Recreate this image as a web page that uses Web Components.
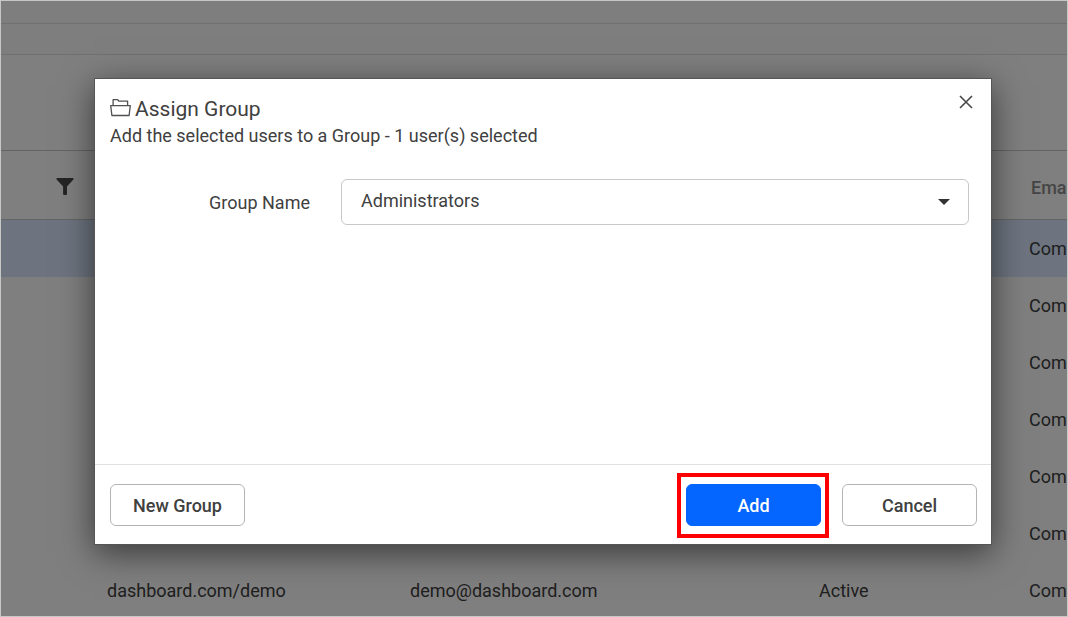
<!DOCTYPE html>
<html lang="en">
<head>
<meta charset="utf-8">
<title>Assign Group</title>
<style>
body { margin: 0; font-family: Roboto, "Liberation Sans", sans-serif; font-size: 18px; color: #404040; }
</style>
</head>
<body>
<app-shell>
  <top-bars></top-bars>
  <user-table></user-table>
  <group-dialog slot="overlay">
    <span slot="title">Assign Group</span>
    <span slot="subtitle">Add the selected users to a Group - 1 user(s) selected</span>
    <group-field></group-field>
    <ui-button slot="start">New Group</ui-button>
    <ui-button slot="end" kind="primary" marked>Add</ui-button>
    <ui-button slot="end">Cancel</ui-button>
  </group-dialog>
</app-shell>
<script>
const define = (name, html) => customElements.define(name, class extends HTMLElement {
  constructor() {
    super();
    const t = document.createElement('template');
    t.innerHTML = html;
    this.attachShadow({ mode: 'open' }).append(t.content.cloneNode(true));
  }
});

define('app-shell', `
<style>
:host { display: block; position: relative; box-sizing: border-box; height: 100vh; overflow: hidden; border: 1px solid #c6c8c6; background: #fff; }
.overlay { position: absolute; inset: 0; background: rgba(0,0,0,.5); display: flex; align-items: flex-start; padding: 77px 75px 0 93px; }
::slotted([slot=overlay]) { flex: 1; }
</style>
<slot></slot>
<div class="overlay"><slot name="overlay"></slot></div>`);

define('top-bars', `
<style>
:host { display: block; }
div { box-sizing: border-box; background: #fcfcfc; border-bottom: 1px solid #e0e0e0; }
.a { height: 23px; } .b { height: 31px; } .c { height: 96px; border-color: #c8c8c8; background: #fff; }
</style>
<div class="a"></div><div class="b"></div><div class="c"></div>`);

define('user-table', `
<style>
:host { display: block; }
table { width: 100%; border-collapse: separate; border-spacing: 0; table-layout: fixed; }
th, td { box-sizing: border-box; padding: 0; text-align: left; white-space: nowrap; }
th { height: 69px; border-bottom: 1px solid #c8c8c8; color: #8c8c8c; font-weight: 500; padding-top: 4px; }
th:last-child { padding-left: 2px; }
td { height: 57px; color: #404040; }
.selected td { background: #dae8ff; }
.pick { width: 106px; } .name { width: 303px; } .status { width: 210px; } .type { width: 38px; }
th.pick { padding: 4px 0 0 55px; }
svg { display: block; }
</style>
<table>
<thead><tr><th class="pick"><svg width="18" height="18" viewBox="0 0 18 18" fill="#484848"><path d="M1.3 0h15.4c.9 0 1.2.8.7 1.4L11 8.5v7.6c0 .5-.4.9-.9.9H8c-.5 0-.9-.4-.9-.9V8.5L.6 1.4C.1.8.4 0 1.3 0z"/></svg></th><th class="name"></th><th></th><th class="status"></th><th class="type">Ema</th></tr></thead>
<tbody>
<tr class="selected"><td></td><td></td><td></td><td></td><td>Com</td></tr>
<tr><td></td><td></td><td></td><td></td><td>Com</td></tr>
<tr><td></td><td></td><td></td><td></td><td>Com</td></tr>
<tr><td></td><td></td><td></td><td></td><td>Com</td></tr>
<tr><td></td><td></td><td></td><td></td><td>Com</td></tr>
<tr><td></td><td></td><td></td><td></td><td>Com</td></tr>
<tr><td></td><td>dashboard.com/demo</td><td>demo@dashboard.com</td><td>Active</td><td>Com</td></tr>
</tbody>
</table>`);

define('group-dialog', `
<style>
:host { display: block; }
section { background: #fff; border: 1px solid #555; box-shadow: 0 8px 32px rgba(0,0,0,.55); }
header { display: flex; justify-content: space-between; align-items: flex-start; padding: 16px 16px 0 15px; }
h1 { margin: 0; display: flex; align-items: center; gap: 4px; font-size: 21px; font-weight: 400; line-height: 28px; }
p { margin: 0; line-height: 26px; }
.close { border: 0; background: none; padding: 0; width: 18px; height: 14px; display: grid; place-items: center; }
.body { box-sizing: border-box; padding: 30px 22px 0 15px; min-height: 315px; }
footer { border-top: 1px solid #e0e0e0; display: flex; justify-content: space-between; padding: 19px 14px 18px 15px; }
.end { display: flex; gap: 21px; }
svg { display: block; }
</style>
<section role="dialog" aria-labelledby="t">
  <header>
    <div>
      <h1 id="t"><svg width="21" height="22" viewBox="0 0 21 22" fill="none" stroke="#505050" stroke-width="1.3" stroke-linejoin="round"><path d="M3.1 7.7V1.7h4.6l1 1.5h8.9v4.5"/><path d="M.7 7.7h19.6l-1.2 9.8H1.9z"/></svg><slot name="title"></slot></h1>
      <p><slot name="subtitle"></slot></p>
    </div>
    <button class="close" aria-label="Close"><svg width="14" height="14" viewBox="0 0 14 14" fill="none" stroke="#484848" stroke-width="1.6"><path d="M1 1l12 12M13 1L1 13"/></svg></button>
  </header>
  <div class="body"><slot></slot></div>
  <footer><slot name="start"></slot><div class="end"><slot name="end"></slot></div></footer>
</section>`);

define('group-field', `
<style>
:host { display: grid; grid-template-columns: 200px 1fr; column-gap: 31px; align-items: center; }
label { text-align: right; line-height: 26px; padding-top: 2px; }
.box { display: grid; align-items: center; }
select { grid-area: 1 / 1; appearance: none; width: 100%; height: 46px; box-sizing: border-box; margin: 0; border: 1px solid #c8c8c8; border-radius: 6px; background: #fff; font: inherit; color: inherit; padding: 0 48px 4px 19px; }
svg { grid-area: 1 / 1; justify-self: end; margin-right: 19px; pointer-events: none; }
</style>
<label for="g">Group Name</label>
<div class="box"><select id="g"><option>Administrators</option></select>
<svg width="12" height="6" viewBox="0 0 12 6" fill="#333"><path d="M0 0h12L6 6z"/></svg></div>`);

define('ui-button', `
<style>
:host { display: block; position: relative; }
button { display: block; box-sizing: border-box; width: 135px; height: 42px; padding: 0; border: 1px solid #b4b4b4; border-radius: 6px; background: #fff; color: #404040; font: inherit; font-weight: 500; }
:host([kind=primary]) button { background: #0565ff; border-color: #0565ff; color: #fff; }
:host([marked])::after { content: ""; position: absolute; inset: -11px -8px -12px -9px; border: 4px solid #f00; pointer-events: none; }
</style>
<button type="button"><slot></slot></button>`);
</script>
</body>
</html>
